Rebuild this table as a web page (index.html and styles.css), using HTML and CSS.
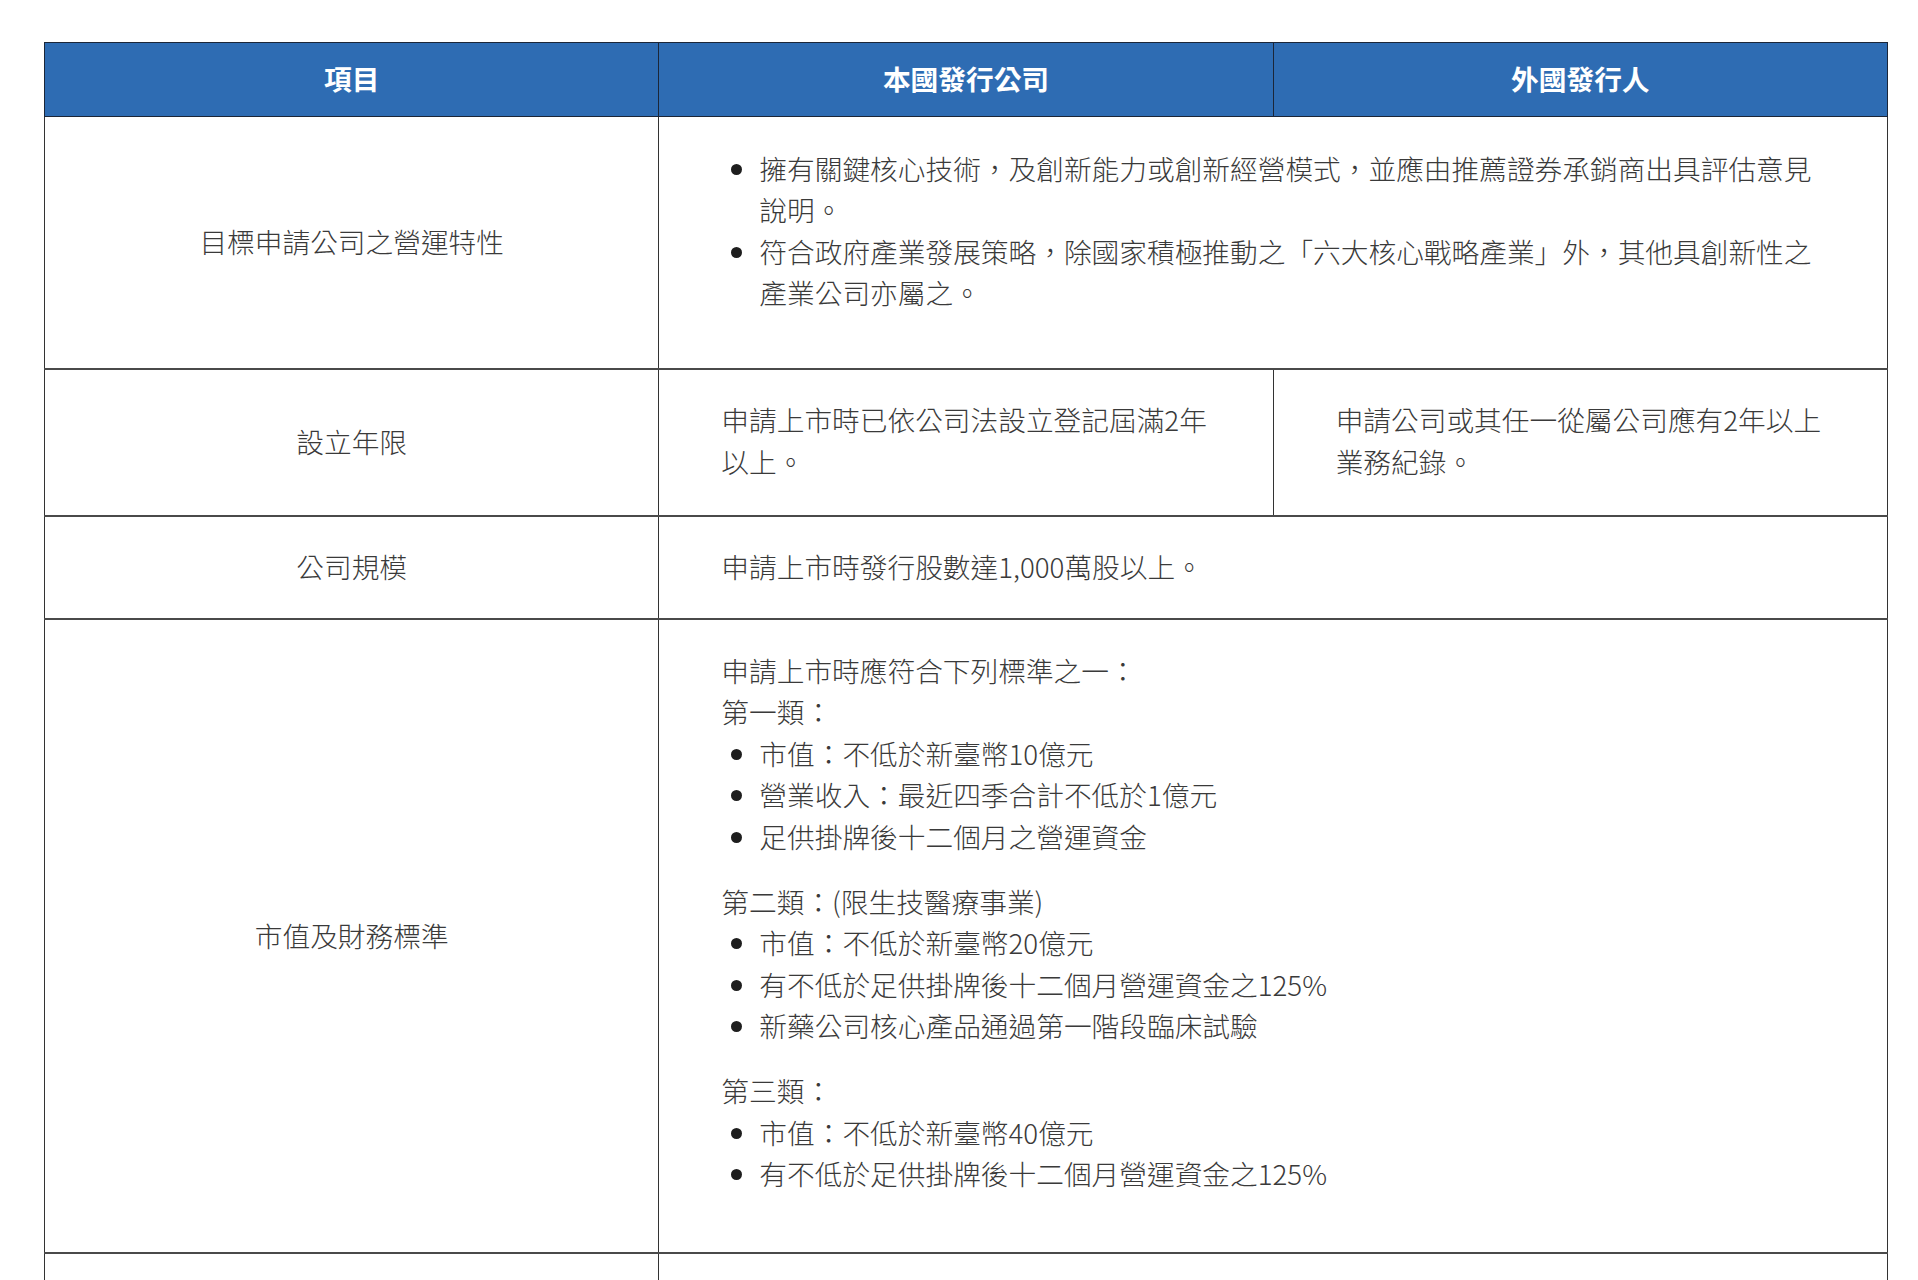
FILE: index.html
```html
<!DOCTYPE html>
<html lang="zh-Hant">
<head>
<meta charset="utf-8">
<title>上市標準</title>
<link rel="stylesheet" href="styles.css">
</head>
<body>
<div class="page">
  <table class="spec">
    <colgroup>
      <col class="c1"><col class="c2"><col class="c3">
    </colgroup>
    <thead>
      <tr>
        <th>項目</th>
        <th>本國發行公司</th>
        <th>外國發行人</th>
      </tr>
    </thead>
    <tbody>
      <tr class="r1">
        <td class="label">目標申請公司之營運特性</td>
        <td class="content nw" colspan="2">
          <ul>
            <li>擁有關鍵核心技術，及創新能力或創新經營模式，並應由推薦證券承銷商出具評估意見<br>說明。</li>
            <li>符合政府產業發展策略，除國家積極推動之「六大核心戰略產業」外，其他具創新性之<br>產業公司亦屬之。</li>
          </ul>
        </td>
      </tr>
      <tr class="r2">
        <td class="label">設立年限</td>
        <td class="content nw">申請上市時已依公司法設立登記屆滿2年<br>以上。</td>
        <td class="content nw">申請公司或其任一從屬公司應有2年以上<br>業務紀錄。</td>
      </tr>
      <tr class="r3">
        <td class="label">公司規模</td>
        <td class="content" colspan="2">申請上市時發行股數達1,000萬股以上。</td>
      </tr>
      <tr class="r4">
        <td class="label">市值及財務標準</td>
        <td class="content" colspan="2">
          <div>申請上市時應符合下列標準之一：</div>
          <div>第一類：</div>
          <ul>
            <li>市值：不低於新臺幣10億元</li>
            <li>營業收入：最近四季合計不低於1億元</li>
            <li>足供掛牌後十二個月之營運資金</li>
          </ul>
          <div>第二類：(限生技醫療事業)</div>
          <ul>
            <li>市值：不低於新臺幣20億元</li>
            <li>有不低於足供掛牌後十二個月營運資金之125%</li>
            <li>新藥公司核心產品通過第一階段臨床試驗</li>
          </ul>
          <div>第三類：</div>
          <ul>
            <li>市值：不低於新臺幣40億元</li>
            <li>有不低於足供掛牌後十二個月營運資金之125%</li>
          </ul>
        </td>
      </tr>
      <tr class="r5">
        <td class="label"></td>
        <td class="content" colspan="2"></td>
      </tr>
    </tbody>
  </table>
</div>
</body>
</html>
```
FILE: styles.css
```css
html, body {
  margin: 0;
  padding: 0;
  background: #ffffff;
}

.page {
  padding: 42px 30px 0 44px;
}

.spec {
  width: 1844px;
  table-layout: fixed;
  border-collapse: collapse;
  font-family: "Noto Sans CJK TC", "Noto Sans CJK SC", "Noto Sans", sans-serif;
  font-size: 27.7px;
  line-height: 41.6px;
  color: #3a3a3a;
  font-weight: 300;
}

.c1, .c2, .c3 {
  width: 33.333%;
}

.spec th {
  background: #2e6cb3;
  color: #ffffff;
  font-weight: 700;
  height: 72.5px;
  padding: 0;
  text-align: center;
  vertical-align: middle;
  border: 1.5px solid #1b2638;
}

.spec td {
  border-left: 1px solid #333333;
  border-right: 1px solid #333333;
  border-bottom: 2px solid #4a4a4a;
  vertical-align: middle;
}

.spec td.label {
  text-align: center;
  padding: 0 20px;
}

.spec td.content {
  text-align: left;
  padding: 32px 60px 31px 62px;
}

.spec td.nw {
  white-space: nowrap;
}

.spec ul {
  margin: 0 0 23px 0;
  padding: 0 0 0 38px;
  list-style: disc;
}

.spec li::marker {
  color: #1e1e1e;
}

.r1 td.content {
  padding-top: 31px;
  padding-bottom: 31px;
}

.r2 td.content {
  padding-top: 29.5px;
  padding-bottom: 32px;
}

.r3 td.content {
  padding-top: 29.5px;
  padding-bottom: 30px;
}

.r4 td.content {
  padding-top: 30px;
  padding-bottom: 34px;
}

.r5 td {
  height: 100px;
}
```
